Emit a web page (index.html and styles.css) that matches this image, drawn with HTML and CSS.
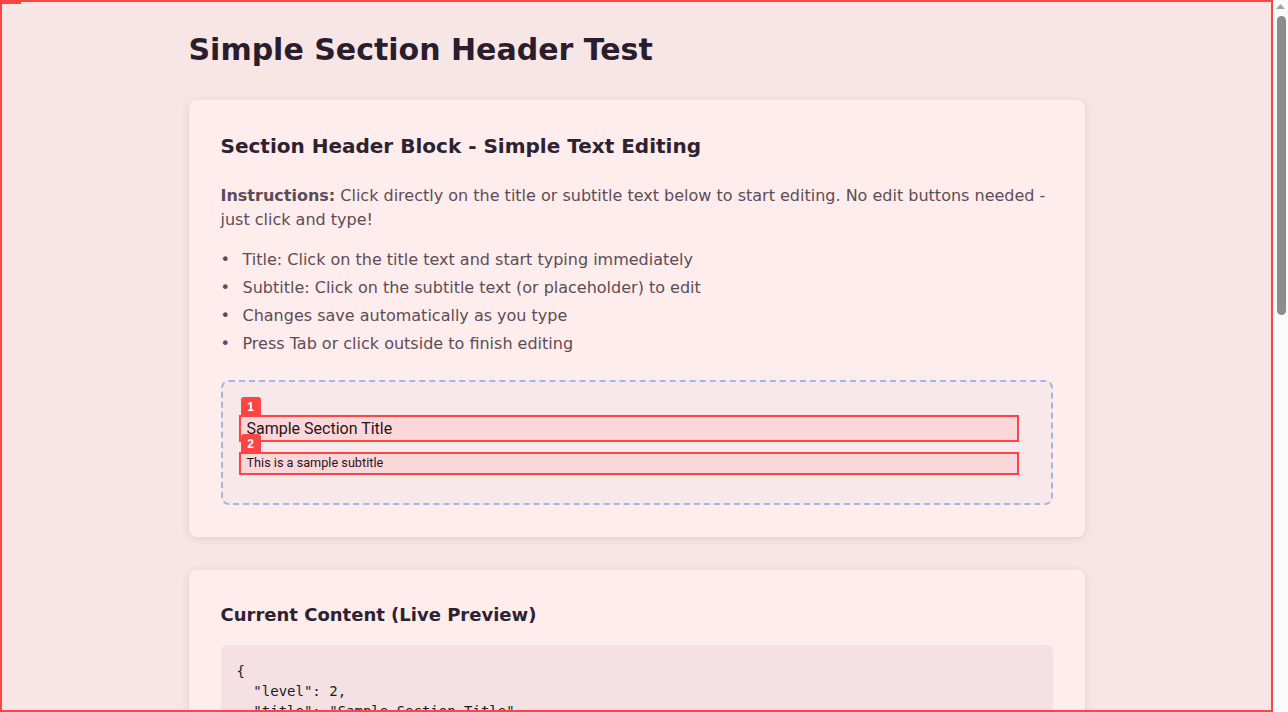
FILE: index.html
```html
<!DOCTYPE html>
<html lang="en">
<head>
<meta charset="utf-8">
<title>Simple Section Header Test</title>
<link rel="stylesheet" href="styles.css">
</head>
<body>
<div class="viewport">
  <div class="page">
    <h1 class="page-title">Simple Section Header Test</h1>

    <section class="card">
      <h2 class="card-title">Section Header Block - Simple Text Editing</h2>
      <p class="intro"><strong>Instructions:</strong> Click directly on the title or subtitle text below to start editing. No edit buttons needed - just click and type!</p>
      <ul class="tips">
        <li>Title: Click on the title text and start typing immediately</li>
        <li>Subtitle: Click on the subtitle text (or placeholder) to edit</li>
        <li>Changes save automatically as you type</li>
        <li>Press Tab or click outside to finish editing</li>
      </ul>
      <div class="block">
        <div class="field field-title" contenteditable="true">Sample Section Title<span class="mark">1</span></div>
        <div class="field field-sub" contenteditable="true">This is a sample subtitle<span class="mark">2</span></div>
      </div>
    </section>

    <section class="card">
      <h2 class="card-title card-title-small">Current Content (Live Preview)</h2>
      <pre class="code">{
  "level": 2,
  "title": "Sample Section Title",
  "subtitle": "This is a sample subtitle"
}</pre>
    </section>
  </div>
  <div class="frame"><span class="mark frame-mark"></span></div>
</div>
<div class="scrollbar" aria-hidden="true">
  <svg class="scroll-arrow" width="15" height="14" viewBox="0 0 15 14"><polygon points="3,11 7.5,6 12,11" fill="#a3a3a3"/></svg>
  <div class="scroll-thumb"></div>
</div>
</body>
</html>
```
FILE: styles.css
```css
html, body {
  margin: 0;
  padding: 0;
  height: 100%;
  overflow: hidden;
}
body {
  display: flex;
  background: #f8e6e6;
  font-family: "DejaVu Sans", "Liberation Sans", sans-serif;
  color: #2d2230;
}
.viewport {
  position: relative;
  flex: 1;
  height: 100vh;
  overflow-y: auto;
}
.page {
  width: 896px;
  margin: 0 auto;
  padding: 33px 0 40px;
  min-height: 1550px;
}
.page-title {
  margin: 0 0 33px;
  font-size: 30px;
  line-height: 34px;
  font-weight: bold;
  color: #2a1d2c;
}
.card {
  background: #ffecec;
  border-radius: 8px;
  box-shadow: 0 2px 8px rgba(90, 40, 50, 0.14);
  padding: 32px;
  margin-bottom: 33px;
}
.card-title {
  margin: 0 0 24px;
  font-size: 20px;
  line-height: 28px;
  font-weight: bold;
  color: #2d2230;
}
.card-title-small {
  font-size: 18px;
  line-height: 24px;
  margin-bottom: 18px;
  padding-top: 1px;
}
.intro {
  margin: 0;
  font-size: 16px;
  line-height: 24px;
  color: #5c4c57;
}
.tips {
  margin: 14px 0 22px;
  padding: 0;
  list-style: none;
  font-size: 16px;
  line-height: 28px;
  color: #5c4c57;
}
.tips li::before {
  content: "\2022";
  display: inline-block;
  width: 22px;
}
.block {
  border: 2px dashed #a3b6ec;
  border-radius: 8px;
  background: #f9e8ea;
  padding: 33px 32px 28px 16px;
}
.field {
  position: relative;
  border: 2px solid #ff4444;
  background: #fbd7da;
  font-family: Roboto, "Liberation Sans", sans-serif;
  color: #2a1418;
  padding: 0 6px;
  outline: none;
}
.field-title {
  font-size: 16px;
  line-height: 23px;
  margin-bottom: 10px;
}
.field-sub {
  font-size: 12.7px;
  line-height: 17px;
  padding-bottom: 2px;
}
.mark {
  position: absolute;
  top: -20px;
  left: 0;
  width: 20px;
  height: 20px;
  background: #ff4444;
  color: #ffffff;
  border-radius: 3px 3px 0 0;
  font-family: "Liberation Sans", Arial, sans-serif;
  font-size: 12px;
  font-weight: bold;
  line-height: 20px;
  text-align: center;
}
.code {
  margin: 0;
  background: #f5e1e3;
  border-radius: 6px;
  padding: 16px;
  font-family: "DejaVu Sans Mono", "Liberation Mono", monospace;
  font-size: 14px;
  line-height: 20px;
  color: #1f1a1c;
}
.frame {
  position: absolute;
  top: 0;
  left: 0;
  right: 0;
  height: 100vh;
  box-sizing: border-box;
  border: 2px solid #ff4444;
  pointer-events: none;
}
.frame-mark {
  top: -18px;
  left: -2px;
  width: 21px;
}
.scrollbar {
  flex: 0 0 15px;
  height: 100vh;
  background: #fafafa;
  display: flex;
  flex-direction: column;
  align-items: center;
}
.scroll-arrow {
  display: block;
  margin-top: -2px;
  flex: 0 0 auto;
}
.scroll-thumb {
  width: 9px;
  height: 299px;
  margin-top: 4px;
  margin-left: 2px;
  border-radius: 5px;
  background: #8c8c8c;
}
```
